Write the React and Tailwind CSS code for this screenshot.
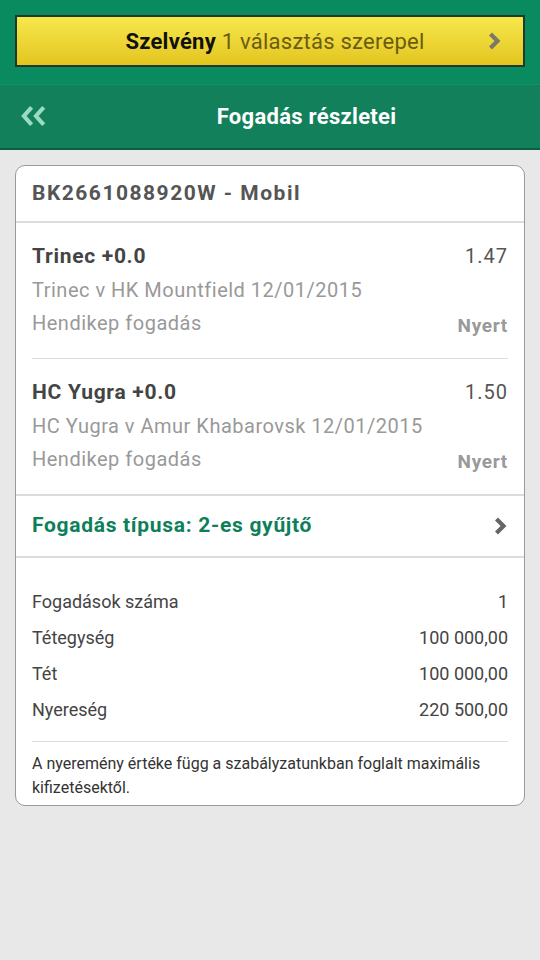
import React from "react";

const Chevron = ({ className }) => (
  <svg viewBox="0 0 14 20" className={className} fill="none">
    <path d="M3.5 3 L10.5 10 L3.5 17" stroke="currentColor" strokeWidth="4.2" strokeLinecap="butt" strokeLinejoin="miter" />
  </svg>
);

const Selection = ({ title, odds, match, last }) => (
  <div className="px-4">
    <div className={`pt-[16px] pb-[18px] ${last ? "" : "border-b border-[#dcdcdc]"}`}>
      <div className="flex justify-between leading-[34px]">
        <span className="text-[21px] tracking-[0.7px] font-bold text-[#444]">{title}</span>
        <span className="text-[20px] tracking-[1px] text-[#555]">{odds}</span>
      </div>
      <div className="leading-[34px] text-[20px] tracking-[0.5px] text-[#999]">{match}</div>
      <div className="flex justify-between items-baseline leading-[32px]">
        <span className="text-[20px] tracking-[0.5px] text-[#999]">Hendikep fogadás</span>
        <span className="text-[19px] tracking-[0.7px] font-bold text-[#999] relative top-[2px]">Nyert</span>
      </div>
    </div>
  </div>
);

const Row = ({ label, value }) => (
  <div className="flex justify-between leading-[36px] text-[18px] text-[#444]">
    <span>{label}</span>
    <span>{value}</span>
  </div>
);

export default function App() {
  return (
    <div className="min-h-[960px] bg-[#e8e8e8]" style={{ fontFamily: "Roboto, 'Noto Sans', sans-serif" }}>
      <div className="bg-[#0a8a5f] px-[15px] pt-[15px] pb-[17px]">
        <div className="h-[52px] border-2 border-[#1d3a2c] bg-gradient-to-b from-[#f7e84a] to-[#e3c51e] flex items-center relative">
          <div className="flex-1 pl-[10px] text-center text-[22px] tracking-[0.25px]">
            <span className="font-bold text-[#111]">Szelvény</span>
            <span className="text-[#6b5c12]"> 1 választás szerepel</span>
          </div>
          <Chevron className="absolute right-[22px] top-[14px] w-[14px] h-[20px] text-[#7a7868]" />
        </div>
      </div>
      <div className="h-[66px] bg-[#13805c] border-t border-[#1a9066] border-b-2 border-b-[#0c5c42] flex items-center relative">
        <svg viewBox="0 0 30 24" className="absolute left-[20px] top-[19px] w-[29px] h-[24px] text-[#9adcc2]" fill="none">
          <path d="M12 3 L4 12 L12 21" stroke="currentColor" strokeWidth="4.2" />
          <path d="M24.5 3 L16.5 12 L24.5 21" stroke="currentColor" strokeWidth="4.2" />
        </svg>
        <div className="flex-1 pl-[73px] text-center text-[22px] tracking-[0.3px] font-bold text-white">Fogadás részletei</div>
      </div>
      <div className="p-[15px]">
        <div className="bg-white border border-[#9a9a9a] rounded-[10px] overflow-hidden">
          <div className="h-[57px] px-4 flex items-center border-b-2 border-[#dcdcdc] text-[21px] tracking-[1.5px] font-bold text-[#555]">
            BK2661088920W - Mobil
          </div>
          <Selection title="Trinec +0.0" odds="1.47" match="Trinec v HK Mountfield 12/01/2015" />
          <Selection title="HC Yugra +0.0" odds="1.50" match="HC Yugra v Amur Khabarovsk 12/01/2015" last />
          <div className="h-[64px] px-4 flex items-center justify-between border-y-2 border-[#dcdcdc]">
            <span className="text-[21px] tracking-[0.7px] font-bold text-[#0d7f5a]">Fogadás típusa: 2-es gyűjtő</span>
            <Chevron className="w-[14px] h-[20px] text-[#666] mr-[1px]" />
          </div>
          <div className="px-4 pt-[26px]">
            <div className="pb-[13px] border-b border-[#dcdcdc]">
              <Row label="Fogadások száma" value="1" />
              <Row label="Tétegység" value="100 000,00" />
              <Row label="Tét" value="100 000,00" />
              <Row label="Nyereség" value="220 500,00" />
            </div>
            <div className="pt-[10px] pb-[5px] text-[16px] leading-[24px] text-[#333]">
              A nyeremény értéke függ a szabályzatunkban foglalt maximális kifizetésektől.
            </div>
          </div>
        </div>
      </div>
    </div>
  );
}
